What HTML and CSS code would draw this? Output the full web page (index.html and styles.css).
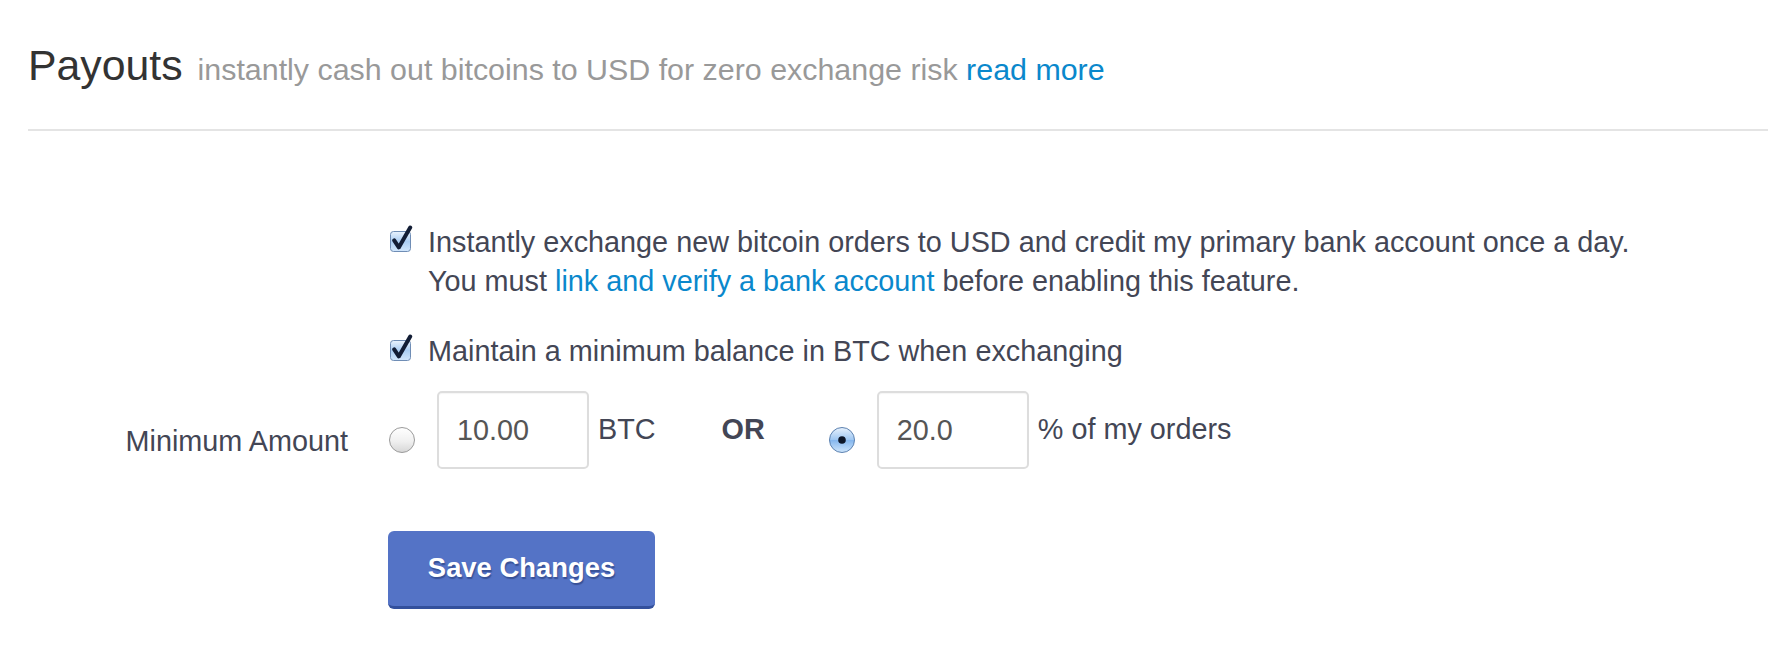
FILE: index.html
```html
<!DOCTYPE html>
<html lang="en">
<head>
<meta charset="utf-8">
<title>Payouts</title>
<link rel="stylesheet" href="styles.css">
</head>
<body>
<div class="page">
  <header class="page-header">
    <h1 class="page-title">Payouts <small class="page-subtitle">instantly cash out bitcoins to USD for zero exchange risk <a href="#" class="link">read more</a></small></h1>
  </header>

  <form class="form">
    <div class="form-row row-exchange">
      <div class="form-label"></div>
      <div class="form-controls">
        <label class="check">
          <svg class="checkbox" viewBox="0 0 25 28" width="25" height="28" aria-hidden="true">
            <defs>
              <linearGradient id="cbg1" x1="0" y1="0" x2="0" y2="1">
                <stop offset="0" stop-color="#eaf3fd"/>
                <stop offset="0.5" stop-color="#aacdf3"/>
                <stop offset="1" stop-color="#d3e7fc"/>
              </linearGradient>
            </defs>
            <rect x="1.5" y="6.5" width="20" height="20" rx="3" fill="url(#cbg1)" stroke="#6f8db5"/>
            <path d="M5.2 15.4 L9.8 22.4 L21.2 2.6" fill="none" stroke="#121d35" stroke-width="4" stroke-linecap="round" stroke-linejoin="round"/>
          </svg>
          <span class="check-text">Instantly exchange new bitcoin orders to USD and credit my primary bank account once a day.<br>You must <a href="#" class="link">link and verify a bank account</a> before enabling this feature.</span>
        </label>
      </div>
    </div>

    <div class="form-row row-balance">
      <div class="form-label"></div>
      <div class="form-controls">
        <label class="check">
          <svg class="checkbox" viewBox="0 0 25 28" width="25" height="28" aria-hidden="true">
            <defs>
              <linearGradient id="cbg2" x1="0" y1="0" x2="0" y2="1">
                <stop offset="0" stop-color="#eaf3fd"/>
                <stop offset="0.5" stop-color="#aacdf3"/>
                <stop offset="1" stop-color="#d3e7fc"/>
              </linearGradient>
            </defs>
            <rect x="1.5" y="6.5" width="20" height="20" rx="3" fill="url(#cbg2)" stroke="#6f8db5"/>
            <path d="M5.2 15.4 L9.8 22.4 L21.2 2.6" fill="none" stroke="#121d35" stroke-width="4" stroke-linecap="round" stroke-linejoin="round"/>
          </svg>
          <span class="check-text">Maintain a minimum balance in BTC when exchanging</span>
        </label>
      </div>
    </div>

    <div class="form-row row-amount">
      <div class="form-label amount-label">Minimum Amount</div>
      <div class="form-controls amount-controls">
        <svg class="radio" viewBox="0 0 28 28" width="28" height="28" aria-hidden="true">
          <defs>
            <linearGradient id="rg1" x1="0" y1="0" x2="0" y2="1">
              <stop offset="0" stop-color="#ffffff"/>
              <stop offset="0.55" stop-color="#f0f0f0"/>
              <stop offset="1" stop-color="#d6d6d6"/>
            </linearGradient>
          </defs>
          <circle cx="14" cy="14" r="12.5" fill="url(#rg1)" stroke="#9b9b9b"/>
        </svg>
        <input class="amount-input" type="text" value="10.00">
        <span class="unit">BTC</span>
        <span class="or">OR</span>
        <svg class="radio" viewBox="0 0 28 28" width="28" height="28" aria-hidden="true">
          <defs>
            <linearGradient id="rg2" x1="0" y1="0" x2="0" y2="1">
              <stop offset="0" stop-color="#e8f2fd"/>
              <stop offset="0.5" stop-color="#9dc6f2"/>
              <stop offset="0.52" stop-color="#86b7ee"/>
              <stop offset="1" stop-color="#cfe6fc"/>
            </linearGradient>
          </defs>
          <circle cx="14" cy="14" r="12.5" fill="url(#rg2)" stroke="#5d82b0"/>
          <circle cx="14" cy="14" r="3.8" fill="#0d1628"/>
        </svg>
        <input class="amount-input" type="text" value="20.0">
        <span class="unit">% of my orders</span>
      </div>
    </div>

    <div class="form-row row-actions">
      <div class="form-label"></div>
      <div class="form-controls">
        <button type="button" class="btn-save">Save Changes</button>
      </div>
    </div>
  </form>
</div>
</body>
</html>
```

FILE: styles.css
```css
html, body {
  margin: 0;
  padding: 0;
  background: #ffffff;
}

body {
  font-family: "Liberation Sans", Arial, Helvetica, sans-serif;
  color: #434655;
}

.page {
  padding: 0 14px 0 28px;
}

.page-header {
  padding-top: 40px;
  padding-bottom: 35px;
  border-bottom: 2px solid #e4e4e4;
}

.page-title {
  margin: 0;
  font-size: 42.8px;
  line-height: 50px;
  font-weight: normal;
  color: #333333;
  white-space: nowrap;
}

.page-subtitle {
  font-size: 30.4px;
  color: #999999;
  margin-left: 3px;
}

.link {
  color: #0a88cc;
  text-decoration: none;
}

.form {
  padding-top: 92px;
}

.form-row {
  display: grid;
  grid-template-columns: 320px 1fr;
  column-gap: 40px;
}

.form-label {
  text-align: right;
  font-size: 28.8px;
  line-height: 39px;
}

.form-controls {
  font-size: 28.8px;
  line-height: 39px;
}

.row-exchange {
  margin-bottom: 31px;
}

.row-balance {
  margin-bottom: 20px;
}

.row-amount {
  margin-bottom: 62px;
}

.check {
  display: flex;
  align-items: flex-start;
  gap: 14px;
}

.checkbox {
  flex: none;
  margin-top: 2px;
  margin-left: 1px;
}

.check-text {
  white-space: nowrap;
}

.amount-label {
  padding-top: 31px;
}

.amount-controls {
  display: flex;
  align-items: center;
  height: 78px;
}

.radio {
  flex: none;
  margin-top: 20px;
  margin-right: 21px;
}

.amount-input {
  box-sizing: border-box;
  width: 152px;
  height: 78px;
  border: 2px solid #dddddd;
  border-radius: 5px;
  padding: 0 0 0 18px;
  margin: 0;
  font-family: "Liberation Sans", Arial, Helvetica, sans-serif;
  font-size: 28.8px;
  color: #555555;
  background: #ffffff;
  box-shadow: inset 0 1px 1px rgba(0, 0, 0, 0.04);
  outline: none;
}

.unit {
  margin-left: 9px;
  margin-top: -2px;
  white-space: nowrap;
}

.or {
  font-weight: bold;
  margin-left: 66px;
  margin-right: 63px;
  margin-top: -2px;
}

.btn-save {
  display: block;
  box-sizing: border-box;
  width: 267px;
  height: 78px;
  padding: 0 0 2px;
  border: 0;
  border-bottom: 3px solid #33509c;
  border-radius: 6px;
  background: #5473c6;
  color: #ffffff;
  font-family: "Liberation Sans", Arial, Helvetica, sans-serif;
  font-weight: bold;
  font-size: 27.4px;
  text-shadow: 1px 2px 1px rgba(32, 52, 112, 0.55);
  cursor: pointer;
}
```
